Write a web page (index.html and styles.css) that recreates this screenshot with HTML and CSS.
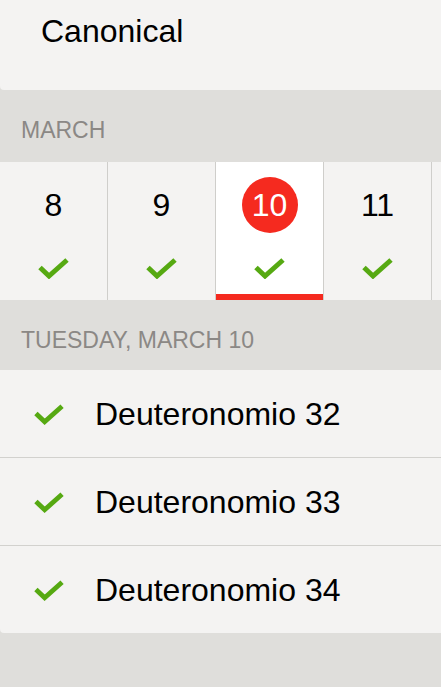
FILE: index.html
```html
<!DOCTYPE html>
<html>
<head>
<meta charset="utf-8">
<link rel="stylesheet" href="styles.css">
</head>
<body>
<div class="card top-card">
  <div class="title">Canonical</div>
</div>
<div class="section-header month">MARCH</div>
<div class="strip">
  <div class="day">
    <div class="num"><span>8</span></div>
    <svg class="check" viewBox="0 0 31 22" width="31" height="22"><polyline points="2,10.5 11,19 29,3"/></svg>
  </div>
  <div class="day">
    <div class="num"><span>9</span></div>
    <svg class="check" viewBox="0 0 31 22" width="31" height="22"><polyline points="2,10.5 11,19 29,3"/></svg>
  </div>
  <div class="day selected">
    <div class="num"><span class="circle">10</span></div>
    <svg class="check" viewBox="0 0 31 22" width="31" height="22"><polyline points="2,10.5 11,19 29,3"/></svg>
  </div>
  <div class="day">
    <div class="num"><span>11</span></div>
    <svg class="check" viewBox="0 0 31 22" width="31" height="22"><polyline points="2,10.5 11,19 29,3"/></svg>
  </div>
  <div class="day"></div>
</div>
<div class="section-header date">TUESDAY, MARCH 10</div>
<div class="card list">
  <div class="row">
    <svg class="check" viewBox="0 0 31 22" width="30" height="22"><polyline points="2,10.5 11,19 29,3"/></svg>
    <span class="label">Deuteronomio 32</span>
  </div>
  <div class="row">
    <svg class="check" viewBox="0 0 31 22" width="30" height="22"><polyline points="2,10.5 11,19 29,3"/></svg>
    <span class="label">Deuteronomio 33</span>
  </div>
  <div class="row">
    <svg class="check" viewBox="0 0 31 22" width="30" height="22"><polyline points="2,10.5 11,19 29,3"/></svg>
    <span class="label">Deuteronomio 34</span>
  </div>
</div>
</body>
</html>
```

FILE: styles.css
```css
html, body {
  margin: 0;
  padding: 0;
}
body {
  background: #dfdedb;
  font-family: "Liberation Sans", Arial, sans-serif;
  color: #000;
  width: 441px;
  height: 687px;
  overflow: hidden;
}
.card {
  background: #f4f3f2;
  border-radius: 0 0 0 4px;
}
.top-card {
  height: 90px;
  box-sizing: border-box;
  padding: 15px 0 0 41px;
}
.title {
  font-size: 32px;
  line-height: 32px;
}
.section-header {
  box-sizing: border-box;
  padding: 29px 0 0 21px;
  font-size: 23px;
  line-height: 23px;
  color: #8b8885;
}
.month {
  height: 72px;
}
.date {
  height: 70px;
}
.strip {
  display: flex;
  height: 138px;
  background: #f4f3f2;
  overflow: hidden;
}
.day {
  flex: 0 0 107px;
  border-right: 1px solid #cfcecb;
  display: flex;
  flex-direction: column;
  align-items: center;
  padding-top: 15px;
  box-sizing: content-box;
  position: relative;
}
.day.selected {
  background: #ffffff;
}
.day.selected::after {
  content: "";
  position: absolute;
  left: 0;
  right: 0;
  bottom: 0;
  height: 6px;
  background: #f52a1f;
}
.num {
  height: 56px;
  display: flex;
  align-items: center;
  justify-content: center;
  font-size: 32px;
  line-height: 32px;
}
.circle {
  width: 56px;
  height: 56px;
  border-radius: 50%;
  background: #f52a1f;
  color: #fff;
  display: flex;
  align-items: center;
  justify-content: center;
}
.strip .check {
  margin-top: 24px;
}
.check polyline {
  fill: none;
  stroke: #56a912;
  stroke-width: 5;
  stroke-linecap: butt;
  stroke-linejoin: miter;
}
.list {
  display: flex;
  flex-direction: column;
}
.row {
  height: 87px;
  display: flex;
  align-items: center;
  padding-left: 34px;
  gap: 31px;
  border-bottom: 1px solid #d2d1ce;
}
.row:last-child {
  border-bottom: none;
}
.label {
  font-size: 32px;
  line-height: 32px;
}
```
